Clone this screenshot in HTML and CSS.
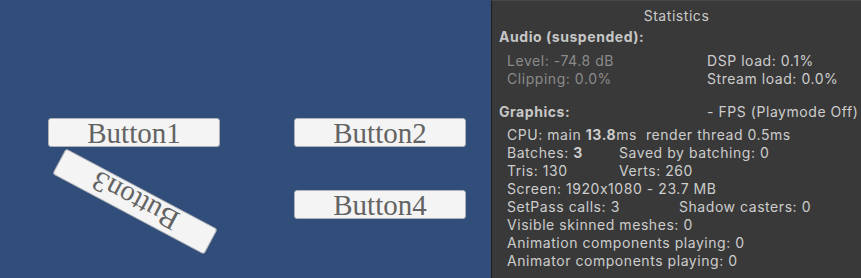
FILE: index.html
```html
<!DOCTYPE html>
<html lang="en">
<head>
    <meta charset="UTF-8">
    <meta name="viewport" content="width=device-width, initial-scale=1.0">
    <title>Game view - Statistics</title>
    <link rel="stylesheet" href="styles.css">
</head>
<body>
    <div class='game'>
        <div class='buttons'>
            <div class='button'>Button1</div>
            <div class='button'>Button2</div>
            <div class='button turned'>Button3</div>
            <div class='button'>Button4</div>
        </div>
    </div>
    <div class='stats'>
        <div class='statsTitle'>Statistics</div>
        <div class='head audioHead'>Audio (suspended):</div>
        <div class='block audio'>
            <div class='line'><span class='colAudio dim'>Level: -74.8 dB</span><span>DSP load: 0.1%</span></div>
            <div class='line'><span class='colAudio dim'>Clipping: 0.0%</span><span>Stream load: 0.0%</span></div>
        </div>
        <div class='head graphicsHead'><span class='colHead'>Graphics:</span><span class='fps'>- FPS (Playmode Off)</span></div>
        <div class='block graphics'>
            <div class='line'>CPU: main <b>13.8</b>ms&nbsp; render thread 0.5ms</div>
            <div class='line'><span class='colBatch'>Batches: <b>3</b></span><span>Saved by batching: 0</span></div>
            <div class='line'><span class='colBatch'>Tris: 130</span><span>Verts: 260</span></div>
            <div class='line'>Screen: 1920x1080 - 23.7 MB</div>
            <div class='line'><span class='colPass'>SetPass calls: 3</span><span>Shadow casters: 0</span></div>
            <div class='line'>Visible skinned meshes: 0</div>
            <div class='line'>Animation components playing: 0</div>
            <div class='line'>Animator components playing: 0</div>
        </div>
    </div>
</body>
</html>
```

FILE: styles.css
```css
*{margin:0;padding:0;box-sizing:border-box;}
html,body{
    height:100%;
    overflow: hidden;
}
body{
    display: flex;
    background:#314d79;
}
.game{
    width:491px;
    flex-shrink: 0;
}
.buttons{
    display: grid;
    grid-template-columns: 172px 172px;
    grid-auto-rows: 29px;
    column-gap: 74px;
    row-gap: 43px;
    padding: 118px 0 0 48px;
}
.button{
    background:#f4f4f4;
    border:1px solid #aeb1b6;
    border-radius: 3px;
    font-family: "Liberation Serif", serif;
    font-size: 29px;
    line-height: 27px;
    padding-top: 1px;
    color:#636363;
    text-align: center;
}
.turned{
    transform: translate(1px,-3px) rotate(208deg);
}

.stats{
    flex: 1;
    background:#393939;
    border-left:1px solid #1e1e1e;
    border-top:1px solid #474747;
    padding-top: 6px;
    font-family: Inter, "Noto Sans", sans-serif;
    font-size: 14px;
    line-height: 18px;
    letter-spacing: 0.55px;
    color:#cdcdcd;
    white-space: nowrap;
    overflow: hidden;
}
.statsTitle{
    text-align: center;
    color:#cbcbcb;
}
.head{
    padding-left: 7px;
    font-weight: bold;
    color:#c6c6c6;
}
.audioHead{
    margin-top: 3px;
}
.graphicsHead{
    margin-top: 15px;
}
.fps{
    font-weight: normal;
    color:#cdcdcd;
}
.colHead{
    display: inline-block;
    width:208px;
}
.block{
    padding-left: 15px;
}
.audio{
    margin-top: 6px;
}
.graphics{
    margin-top: 5px;
}
.line b{
    font-weight: bold;
}
.dim{
    color:#8b8b8b;
}
.colAudio{
    display: inline-block;
    width:200px;
}
.colBatch{
    display: inline-block;
    width:112px;
}
.colPass{
    display: inline-block;
    width:172px;
}
```
